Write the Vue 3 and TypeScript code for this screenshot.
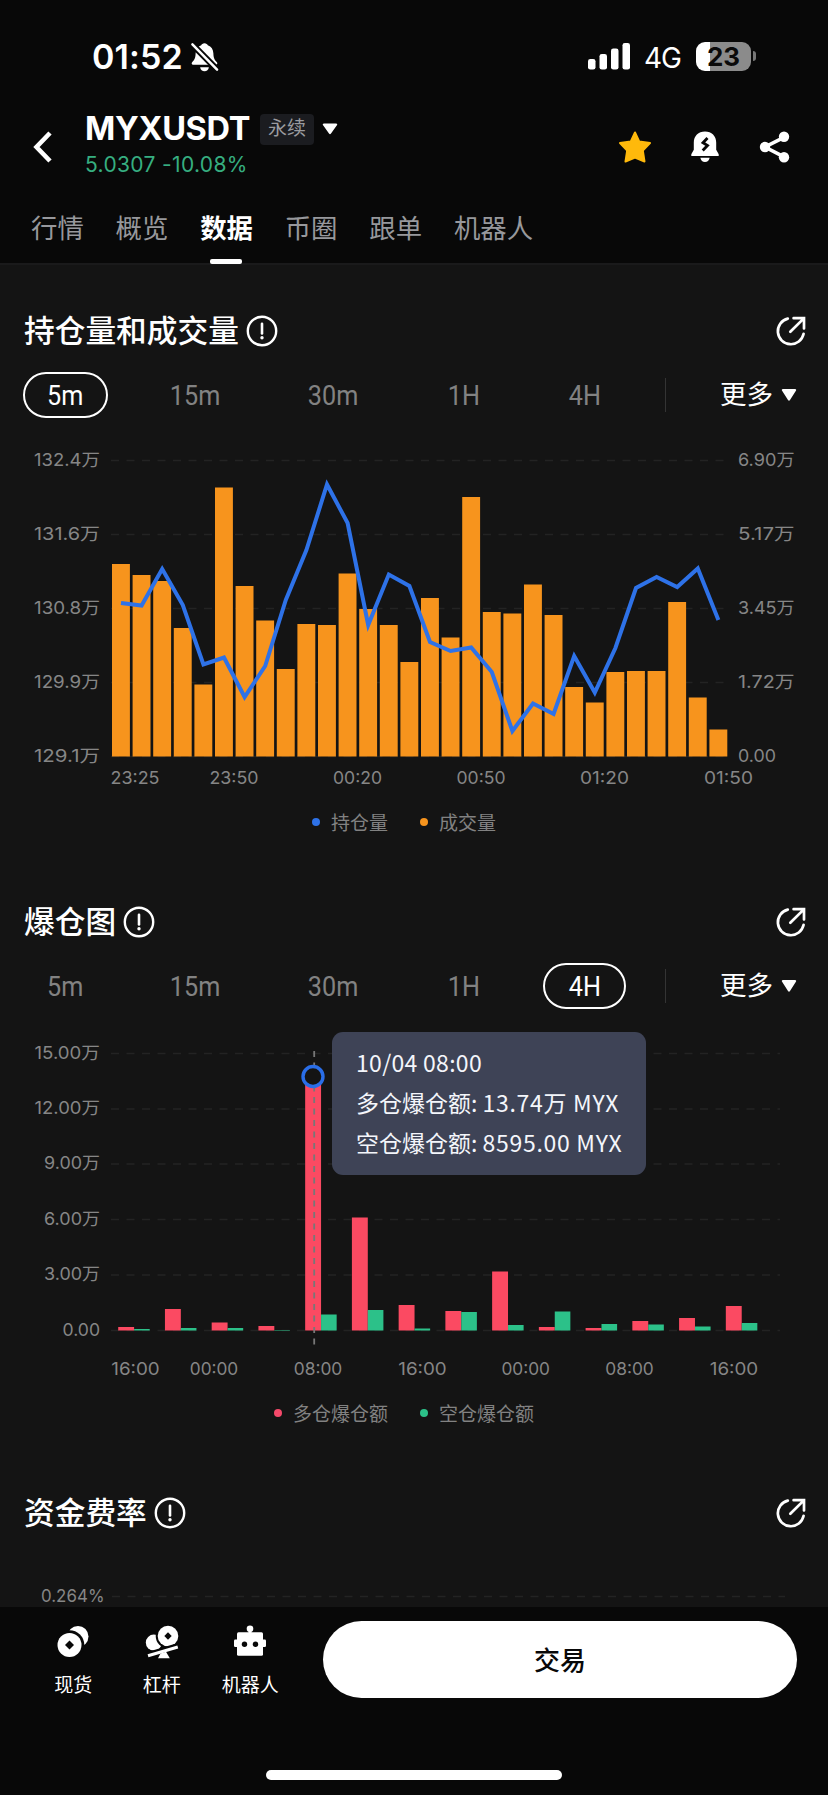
<script setup lang="ts">
interface AxisLabel { text: string; y: number; w: number }
interface TimeLabel { text: string; x: number }

const tabs: string[] = ['行情', '概览', '数据', '币圈', '跟单', '机器人']
const intervals: string[] = ['5m', '15m', '30m', '1H', '4H']

// Open interest and volume
const volBase = 756.5
const volTops: number[] = [564, 575, 581, 628, 684.5, 487.5, 586, 620.5, 669, 624, 625, 573.5, 609, 625, 662, 598, 637.5, 497, 612, 613.5, 584.5, 615, 687, 702.5, 672, 671, 671, 602, 697.5, 729.5]
const oiPoints: number[] = [603, 605.5, 569, 605, 664.5, 657.5, 697, 666, 600, 550, 484.5, 523, 625, 574.5, 586, 642, 651, 647.5, 672, 731, 703.5, 714, 656, 692.5, 648, 588, 577, 587, 568.5, 620]
const volX = (i: number): number => 112 + i * 20.6
const oiPath: string = oiPoints.map((y, i) => `${(volX(i) + 9).toFixed(1)},${y}`).join(' ')
const oiAxis: AxisLabel[] = [
  { text: '132.4万', y: 460.5, w: 66 },
  { text: '131.6万', y: 534.5, w: 66 },
  { text: '130.8万', y: 608.5, w: 66 },
  { text: '129.9万', y: 682.5, w: 66 },
  { text: '129.1万', y: 756.5, w: 66 },
]
const volAxis: AxisLabel[] = [
  { text: '6.90万', y: 460.5, w: 56.5 },
  { text: '5.17万', y: 534.5, w: 56.5 },
  { text: '3.45万', y: 608.5, w: 56.5 },
  { text: '1.72万', y: 682.5, w: 56.5 },
  { text: '0.00', y: 756.5, w: 38 },
]
const volTimes: TimeLabel[] = [
  { text: '23:25', x: 135 }, { text: '23:50', x: 234 }, { text: '00:20', x: 357.5 },
  { text: '00:50', x: 481 }, { text: '01:20', x: 604.5 }, { text: '01:50', x: 728.5 },
]

// Liquidations
const liqBase = 1330.5
const longTops: number[] = [1327, 1309, 1322.5, 1326, 1077, 1217.5, 1305, 1311, 1271.5, 1327, 1328, 1321, 1318, 1306]
const shortTops: number[] = [1329, 1328, 1328, 1330, 1314.5, 1310, 1328.5, 1312, 1325, 1311.5, 1324, 1324.5, 1326.5, 1323]
const liqX = (i: number): number => 118.2 + i * 46.74
const liqAxis: AxisLabel[] = [
  { text: '15.00万', y: 1053.5, w: 65.5 },
  { text: '12.00万', y: 1109, w: 65.5 },
  { text: '9.00万', y: 1164, w: 56 },
  { text: '6.00万', y: 1219.5, w: 56 },
  { text: '3.00万', y: 1275, w: 56 },
  { text: '0.00', y: 1330.5, w: 37.5 },
]
const liqTimes: TimeLabel[] = [
  { text: '16:00', x: 135.5 }, { text: '00:00', x: 214 }, { text: '08:00', x: 318 },
  { text: '16:00', x: 422.5 }, { text: '00:00', x: 525.7 }, { text: '08:00', x: 629.5 }, { text: '16:00', x: 734 },
]

const panels = [
  { title: '持仓量和成交量', active: '5m', kind: 'volume' },
  { title: '爆仓图', active: '4H', kind: 'liquidation' },
  { title: '资金费率', active: '', kind: 'funding' },
]
</script>

<template>
  <div class="screen">
    <header class="top">
      <div class="status">
        <div class="clock">
          <span class="time">01:52</span>
          <svg class="mute" width="29" height="30" viewBox="0 0 30 31">
            <path d="M15 1.200c1.800 0 3 1 3.400 2.200 3.700 1.200 5.700 4.400 5.800 8.600.1 4.500 1 6.600 3.600 9 .8.8.6 2.600-1 2.600H3.200c-1.600 0-1.800-1.800-1-2.600 2.600-2.400 3.500-4.500 3.600-9 .1-4.200 2.100-7.400 5.800-8.600C12 2.200 13.200 1.200 15 1.200z" fill="#fff" />
            <path d="M10.500 26h9c-.3 2.600-2.200 4.200-4.500 4.200s-4.200-1.600-4.500-4.200z" fill="#fff" />
            <path d="M2.500 2.500 28 28.500" stroke="#080808" stroke-width="6.500" />
            <path d="M2.500 2.500 28 28.500" stroke="#fff" stroke-width="2.600" stroke-linecap="round" />
          </svg>
        </div>
        <div class="signals">
          <svg width="44" height="28" viewBox="0 0 44 28" fill="#fff">
            <rect x="1" y="17" width="7.500" height="10.500" rx="2.300" />
            <rect x="12.500" y="12" width="7.500" height="15.500" rx="2.300" />
            <rect x="24" y="6.500" width="7.500" height="21" rx="2.300" />
            <rect x="35.500" y="1" width="7.500" height="26.500" rx="2.300" />
          </svg>
          <span class="net">4G</span>
          <span class="battery"><span class="charge">23</span></span>
          <span class="tip"></span>
        </div>
      </div>

      <div class="symbol-bar">
        <svg class="back" width="22" height="34" viewBox="0 0 22 34">
          <path d="M18 3 4.500 17 18 31" fill="none" stroke="#fff" stroke-width="4.600" />
        </svg>
        <div class="symbol">
          <div class="name-row">
            <span class="name">MYXUSDT</span>
            <span class="badge">永续</span>
            <svg width="16" height="12" viewBox="0 0 16 12"><path d="M2 .5h12c1.200 0 1.600 1 .9 1.800L9 10.600c-.6.8-1.400.8-2 0L1.100 2.300C.4 1.500.8.5 2 .5z" fill="#fff" /></svg>
          </div>
          <div class="price">5.0307 -10.08%</div>
        </div>
        <div class="actions">
          <svg width="34" height="34" viewBox="0 0 34 34"><path d="M17 2.500 21.300 11.600 32 13 24.800 20.500 26.500 31.500 17 27.500 7.500 31.500 9.200 20.500 2 13 12.700 11.600z" fill="#ffb90b" stroke="#ffb90b" stroke-width="2" stroke-linejoin="round" /></svg>
          <svg width="30" height="34" viewBox="0 0 30 34">
            <path d="M15 1.500c6.600 0 11.200 4.600 11.200 11v7.200l2.500 4.600v1.800H1.300v-1.800l2.500-4.600v-7.200c0-6.400 4.600-11 11.200-11z" fill="#fff" />
            <path d="M10.300 27.800h9.400c-.6 2.600-2.300 4.300-4.700 4.300s-4.100-1.700-4.700-4.300z" fill="#fff" />
            <path d="M17.500 8 13 12.800l4.500 2.700-4.800 5" fill="none" stroke="#080808" stroke-width="2.800" />
          </svg>
          <svg width="34" height="34" viewBox="0 0 34 34">
            <path d="M28 6.800 8 17l20 10.300" fill="none" stroke="#fff" stroke-width="3.600" />
            <circle cx="8" cy="17" r="5.200" fill="#fff" /><circle cx="27" cy="6.800" r="5.200" fill="#fff" /><circle cx="27" cy="27.300" r="5.200" fill="#fff" />
          </svg>
        </div>
      </div>

      <nav class="tabs">
        <span v-for="t in tabs" :key="t" class="tab" :class="{ on: t === '数据' }">{{ t }}</span>
      </nav>
    </header>

    <main class="content">
      <section v-for="p in panels" :key="p.title" class="panel">
        <div class="panel-head">
          <h2>{{ p.title }}</h2>
          <svg width="32" height="32" viewBox="0 0 32 32">
            <circle cx="16" cy="16" r="14.200" fill="none" stroke="#fff" stroke-width="2.400" />
            <path d="M16 8.800v9.600" stroke="#fff" stroke-width="2.600" stroke-linecap="round" />
            <circle cx="16" cy="22.700" r="1.700" fill="#fff" />
          </svg>
          <svg class="open" width="32" height="32" viewBox="0 0 32 32" fill="none" stroke="#fff" stroke-width="2.700">
            <path d="M12.800 3.600A13 13 0 1 0 28.600 18.800" stroke-linecap="round" />
            <path d="M15.300 16.800 28.300 3.900M18.600 3.200h10.400v10.300" stroke-linecap="round" stroke-linejoin="miter" />
          </svg>
        </div>

        <div v-if="p.active" class="intervals">
          <span v-for="(n, i) in intervals" :key="n" class="pill" :class="['w' + i, { on: n === p.active }]"><b>{{ n }}</b></span>
          <i class="divider"></i>
          <span class="more">更多</span>
          <svg width="16" height="14" viewBox="0 0 16 14"><path d="M2 1h12c1.200 0 1.500.9.900 1.800L9 12c-.6.900-1.400.9-2 0L1.100 2.800C.5 1.900.8 1 2 1z" fill="#fff" /></svg>
        </div>

        <template v-if="p.kind === 'volume'">
          <svg class="chart" width="828" height="382" viewBox="0 418 828 382">
            <line v-for="a in oiAxis" :key="a.y" x1="111" x2="728" :y1="a.y" :y2="a.y" class="grid" />
            <rect v-for="(y, i) in volTops" :key="i" :x="volX(i)" :y="y" width="17.900" :height="volBase - y" fill="#f7941d" />
            <polyline :points="oiPath" fill="none" stroke="#2e72e8" stroke-width="4" />
            <text v-for="a in oiAxis" :key="a.text" x="100" :y="a.y + 5" text-anchor="end" :textLength="a.w" lengthAdjust="spacingAndGlyphs">{{ a.text }}</text>
            <text v-for="a in volAxis" :key="a.text" x="738" :y="a.y + 5" :textLength="a.w" lengthAdjust="spacingAndGlyphs">{{ a.text }}</text>
            <text v-for="t in volTimes" :key="t.x" :x="t.x" y="783.500" text-anchor="middle" textLength="49" lengthAdjust="spacingAndGlyphs">{{ t.text }}</text>
          </svg>
          <div class="legend"><i class="blue"></i><span>持仓量</span><i class="orange"></i><span>成交量</span></div>
        </template>

        <template v-else-if="p.kind === 'liquidation'">
          <div class="plot">
            <svg class="chart" width="828" height="382" viewBox="0 1009 828 382">
              <line v-for="a in liqAxis" :key="a.y" x1="111" x2="780" :y1="a.y" :y2="a.y" class="grid" />
              <rect v-for="(y, i) in longTops" :key="'l' + i" :x="liqX(i)" :y="y" width="15.900" :height="liqBase - y" fill="#fb4a62" />
              <rect v-for="(y, i) in shortTops" :key="'s' + i" :x="liqX(i) + 15.900" :y="y" width="15.600" :height="liqBase - y" fill="#2cc189" />
              <line x1="314.200" x2="314.200" y1="1051" y2="1346" class="cursor" />
              <circle cx="313" cy="1076.500" r="10" fill="#141414" stroke="#2a6ee8" stroke-width="3.400" />
              <text v-for="a in liqAxis" :key="a.text" x="100" :y="a.y + 5" text-anchor="end" :textLength="a.w" lengthAdjust="spacingAndGlyphs">{{ a.text }}</text>
              <text v-for="t in liqTimes" :key="t.x" :x="t.x" y="1374.500" text-anchor="middle" textLength="48.500" lengthAdjust="spacingAndGlyphs">{{ t.text }}</text>
            </svg>
            <div class="tooltip">
              <div>10/04 08:00</div>
              <div>多仓爆仓额: <span>13.74万 MYX</span></div>
              <div>空仓爆仓额: <span>8595.00 MYX</span></div>
            </div>
          </div>
          <div class="legend"><i class="red"></i><span>多仓爆仓额</span><i class="green"></i><span>空仓爆仓额</span></div>
        </template>

        <svg v-else class="chart" width="828" height="69" viewBox="0 1538 828 69">
          <line x1="112" x2="785" y1="1596.500" y2="1596.500" class="grid" />
          <text x="41" y="1601.500" textLength="63.500" lengthAdjust="spacingAndGlyphs">0.264%</text>
        </svg>
      </section>
    </main>

    <footer class="dock">
      <div class="dock-row">
        <div class="item">
          <svg width="34" height="34" viewBox="0 0 34 34">
            <circle cx="22" cy="11.500" r="10.500" fill="#fff" />
            <circle cx="13.500" cy="20" r="14.800" fill="#080808" />
            <circle cx="13.500" cy="20" r="12" fill="#fff" />
            <path d="M13.500 15.500 18 20l-4.500 4.500L9 20z" fill="#080808" />
          </svg>
          <span>现货</span>
        </div>
        <div class="item">
          <svg width="34" height="34" viewBox="0 0 34 34">
            <circle cx="8.800" cy="17.600" r="8" fill="#fff" />
            <circle cx="23" cy="11" r="12.300" fill="#080808" />
            <circle cx="23" cy="11" r="10.300" fill="#fff" />
            <path d="M23 7.300 26.700 11 23 14.700 19.300 11z" fill="#080808" />
            <path d="M2.500 30.500 33 21.500" stroke="#080808" stroke-width="7" />
            <path d="M3 30.800 32.800 22" stroke="#fff" stroke-width="3" />
            <path d="M15.500 28.500 21 26.800 24.800 33.300H13z" fill="#fff" />
          </svg>
          <span>杠杆</span>
        </div>
        <div class="item">
          <svg width="34" height="34" viewBox="0 0 34 34">
            <circle cx="17" cy="3.800" r="3.300" fill="#fff" />
            <path d="M15.500 5h3v3h-3z" fill="#fff" />
            <rect x="4" y="7.300" width="26" height="23.500" rx="1.500" fill="#fff" />
            <rect x="1" y="14.500" width="32" height="7.500" rx="1.200" fill="#fff" />
            <circle cx="11.500" cy="19.300" r="2.700" fill="#080808" /><circle cx="22.500" cy="19.300" r="2.700" fill="#080808" />
          </svg>
          <span>机器人</span>
        </div>
        <button class="trade">交易</button>
      </div>
      <div class="home"></div>
    </footer>
  </div>
</template>

<style>
body { margin: 0; background: #080808; }
</style>

<style scoped>
.screen {
  width: 828px;
  height: 1795px;
  overflow: hidden;
  display: flex;
  flex-direction: column;
  background: #080808;
  color: #fff;
  font-family: Inter, 'Noto Sans CJK SC', sans-serif;
}
svg { display: block; flex: none; }
.top { height: 265px; box-sizing: border-box; border-bottom: 2px solid #1a1a1b; flex: none; }
.status { height: 101px; display: flex; justify-content: space-between; align-items: flex-start; padding: 0 72px 0 92px; }
.clock { display: flex; align-items: center; height: 30px; margin-top: 42px; }
.time { font-size: 34px; font-weight: 600; line-height: 30px; letter-spacing: 0.100px; width: 98px; white-space: nowrap; }
.signals { display: flex; align-items: center; height: 30px; margin-top: 41px; }
.net { font-size: 28px; font-weight: 400; letter-spacing: -1px; width: 38px; margin: 0 14px 0 13px; line-height: 30px; padding-top: 3px; }
.battery { width: 55px; height: 29px; border-radius: 9px; background: linear-gradient(90deg, #fff 13.500px, #8b8b8b 13.500px); text-align: center; color: #0a0a0a; }
.charge { font-size: 26px; font-weight: 700; line-height: 29px; display: block; }
.tip { width: 3px; height: 10px; margin-left: 2px; border-radius: 0 4px 4px 0; background: #777; }

.symbol-bar { height: 92px; display: flex; padding: 0 37px 0 32px; }
.back { margin: 28.500px 31px 0 0; width: 22px; }
.symbol { flex: 1; padding-top: 10px; }
.name-row { display: flex; align-items: center; height: 36px; }
.name { font-size: 32.500px; font-weight: 700; width: 164px; letter-spacing: -0.300px; line-height: 36px; }
.badge { width: 54px; height: 31px; margin: 0 8px 0 11px; border-radius: 4px; background: #1b1c20; color: #9a9b9f; font-size: 19px; line-height: 30px; text-align: center; }
.price { font-size: 21px; line-height: 26px; margin-top: 5px; color: #36ae80; letter-spacing: 0.350px; white-space: nowrap; }
.actions { display: flex; margin-top: 28.500px; height: 34px; gap: 37.500px; }

.tabs { display: flex; gap: 31.800px; padding-left: 31px; height: 70px; }
.tab { position: relative; font-size: 26.400px; line-height: 70px; color: #97989c; }
.tab.on { color: #fff; font-weight: 700; }
.tab.on::after { content: ''; position: absolute; left: 10px; top: 65.500px; width: 32px; height: 5px; border-radius: 2px; background: #fff; }

.content { height: 1342px; overflow: hidden; background: #141414; flex: none; }
.panel { height: 591px; box-sizing: border-box; padding-top: 41px; }
.panel-head { display: flex; align-items: center; height: 50px; padding: 0 21px 0 24px; }
h2 { margin: 0 7px 0 0; font-size: 30.700px; font-weight: 500; line-height: 50px; }
.open { margin-left: auto; }
.intervals { display: flex; align-items: center; height: 46px; margin-top: 16px; padding-left: 23px; }
.pill { box-sizing: border-box; height: 46px; border-radius: 23px; border: 2px solid transparent; margin-right: 38px; display: flex; align-items: center; justify-content: center; color: #828282; font-family: Roboto, sans-serif; font-size: 28px; }
.pill b { font-weight: 400; transform: scaleX(0.900); }
.pill.on { border-color: #fff; color: #fff; }
.w0 { width: 85px; }
.w1 { width: 99px; }
.w2 { width: 101px; }
.w3 { width: 83px; }
.w4 { width: 83px; }
.divider { width: 1px; height: 34px; margin-left: 1px; background: #343434; }
.more { font-size: 26.500px; line-height: 38px; padding-bottom: 2px; margin: 0 8px 0 54px; }

.chart { font-size: 17.500px; }
.chart text { fill: #868686; font-family: Inter, 'Noto Sans CJK SC', sans-serif; }
.grid { stroke: #232323; stroke-width: 1.500; stroke-dasharray: 8 7.500; }
.cursor { stroke: #777; stroke-width: 1.800; stroke-dasharray: 6 5.500; }
.legend { display: flex; align-items: center; justify-content: center; height: 44px; padding-right: 19px; font-size: 19px; font-weight: 400; color: #828282; }
.legend span { position: relative; top: -1px; left: -1px; }
.legend i { width: 8px; height: 8px; border-radius: 50%; margin-right: 12px; }
.blue { background: #2e72e8; }
.orange { background: #f7941d; margin-left: 31px; }
.red { background: #f5496a; }
.green { background: #2cc189; margin-left: 31px; }
.plot { position: relative; }
.tooltip { position: absolute; left: 332px; top: 23px; width: 314px; height: 143px; box-sizing: border-box; padding: 10px 0 0 24px; border-radius: 11px; background: #3e4356; color: #f4f6fb; font-family: 'Noto Sans CJK SC', sans-serif; font-size: 23px; line-height: 40px; white-space: nowrap; }
.tooltip div:first-child { letter-spacing: 0.300px; }
.tooltip span { letter-spacing: 0.700px; }

.dock { flex: 1; background: #080808; }
.dock-row { display: flex; padding: 14px 31px 0 29px; height: 77px; }
.item { width: 88.500px; display: flex; flex-direction: column; align-items: center; padding-top: 4px; font-size: 19px; line-height: 28px; }
.item span { margin-top: 13px; }
.trade { margin-left: auto; width: 474px; height: 77px; border: 0; border-radius: 39px; background: #fff; color: #080808; font-family: 'Noto Sans CJK SC', sans-serif; font-size: 26px; font-weight: 500; padding: 0 0 2px; }
.home { width: 296px; height: 10px; border-radius: 5px; background: #fff; margin: 72px auto 0; }
</style>
